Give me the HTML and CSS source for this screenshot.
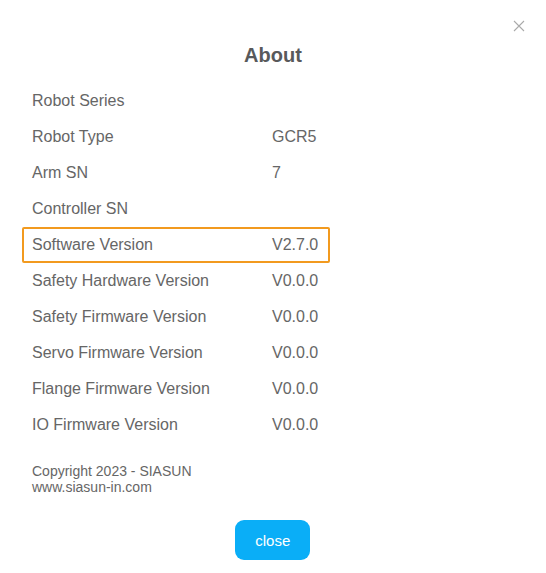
FILE: index.html
```html
<!DOCTYPE html>
<html>
<head>
<meta charset="utf-8">
<link rel="stylesheet" href="styles.css">
</head>
<body>
<div class="dialog">
  <div class="header">
    <span class="close-x" aria-label="close">
      <svg width="12" height="12" viewBox="0 0 12 12"><path d="M1 1L11 11M11 1L1 11" stroke="#aaaaaa" stroke-width="1.1" fill="none"/></svg>
    </span>
    <h1 class="title">About</h1>
  </div>
  <div class="rows">
    <div class="row"><span class="label">Robot Series</span><span class="value"></span></div>
    <div class="row"><span class="label">Robot Type</span><span class="value">GCR5</span></div>
    <div class="row"><span class="label">Arm SN</span><span class="value">7</span></div>
    <div class="row"><span class="label">Controller SN</span><span class="value"></span></div>
    <div class="row active"><span class="label">Software Version</span><span class="value">V2.7.0</span></div>
    <div class="row"><span class="label">Safety Hardware Version</span><span class="value">V0.0.0</span></div>
    <div class="row"><span class="label">Safety Firmware Version</span><span class="value">V0.0.0</span></div>
    <div class="row"><span class="label">Servo Firmware Version</span><span class="value">V0.0.0</span></div>
    <div class="row"><span class="label">Flange Firmware Version</span><span class="value">V0.0.0</span></div>
    <div class="row"><span class="label">IO Firmware Version</span><span class="value">V0.0.0</span></div>
  </div>
  <div class="copyright">
    <div>Copyright 2023 - SIASUN</div>
    <div>www.siasun-in.com</div>
  </div>
  <div class="footer">
    <button class="btn">close</button>
  </div>
</div>
</body>
</html>
```
FILE: styles.css
```css
html, body {
  margin: 0;
  padding: 0;
  background: #ffffff;
}
body {
  font-family: "Liberation Sans", Arial, sans-serif;
  color: #666666;
  width: 546px;
  height: 573px;
  overflow: hidden;
}
.dialog {
  position: relative;
  padding-top: 40px;
}
.header {
  height: 30px;
  display: flex;
  align-items: center;
  justify-content: center;
}
.close-x {
  position: absolute;
  top: 20px;
  left: 513px;
  width: 12px;
  height: 12px;
  display: block;
}
.close-x svg { display: block; }
.title {
  margin: 0;
  font-size: 20px;
  font-weight: 700;
  color: #58595b;
  line-height: 30px;
}
.rows {
  margin-top: 13px;
  display: flex;
  flex-direction: column;
  padding-left: 22px;
}
.row {
  width: 308px;
  height: 36px;
  box-sizing: border-box;
  border: 2px solid transparent;
  border-radius: 2px;
  display: flex;
  align-items: center;
  padding-left: 8px;
  font-size: 16px;
}
.row.active {
  border-color: #f29a1f;
}
.label {
  width: 240px;
  flex: none;
}
.copyright {
  margin-top: 20px;
  padding-left: 32px;
  font-size: 14px;
  line-height: 16px;
  color: #666666;
}
.footer {
  display: flex;
  justify-content: center;
  margin-top: 25px;
}
.btn {
  width: 75px;
  height: 40px;
  border: none;
  border-radius: 9px;
  background: #0aaef7;
  color: #ffffff;
  font-family: "Liberation Sans", Arial, sans-serif;
  font-size: 15px;
  margin-left: -0.5px;
  padding: 0;
}
```
